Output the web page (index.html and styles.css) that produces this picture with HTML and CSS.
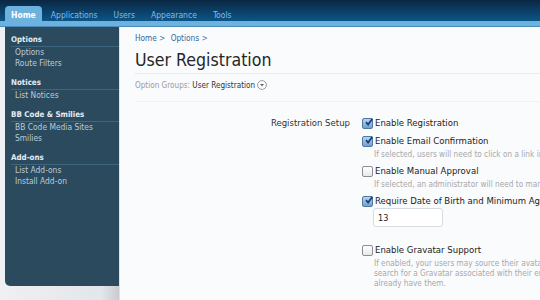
FILE: index.html
```html
<!DOCTYPE html>
<html lang="en">
<head>
    <meta charset="UTF-8">
    <title>User Registration</title>
    <link rel="stylesheet" href="styles.css">
</head>
<body>
    <div class="header">
        <nav class="tabs">
            <a class="tab active">Home</a>
            <a class="tab">Applications</a>
            <a class="tab">Users</a>
            <a class="tab">Appearance</a>
            <a class="tab">Tools</a>
        </nav>
    </div>
    <div class="band"></div>

    <div class="main">
        <div class="side-col">
            <aside class="sidebar">
                <div class="side-group">
                    <h3>Options</h3>
                    <a>Options</a>
                    <a>Route Filters</a>
                </div>
                <div class="side-group">
                    <h3>Notices</h3>
                    <a>List Notices</a>
                </div>
                <div class="side-group">
                    <h3>BB Code &amp; Smilies</h3>
                    <a>BB Code Media Sites</a>
                    <a>Smilies</a>
                </div>
                <div class="side-group">
                    <h3>Add-ons</h3>
                    <a>List Add-ons</a>
                    <a>Install Add-on</a>
                </div>
            </aside>
            <div class="side-foot"></div>
        </div>

        <div class="content">
            <div class="crumbs"><a>Home</a> &gt; <a>Options</a> &gt;</div>
            <h1>User Registration</h1>
            <div class="groups">
                <span class="muted">Option Groups:</span> User Registration
                <span class="drop"><svg width="10" height="10" viewBox="0 0 10 10"><circle cx="5" cy="5" r="4.4" fill="#fff" stroke="#999"/><path d="M3 4h4L5 6.4z" fill="#666"/></svg></span>
            </div>

            <div class="form">
                <div class="label">Registration Setup</div>
                <div class="options">
                    <div class="opt">
                        <label class="check"><span class="box on"><svg width="10" height="10" viewBox="0 0 10 10"><path d="M2 5.2l2.1 2.3L8.4 1.8" fill="none" stroke="#1d3f6e" stroke-width="1.8"/></svg></span>Enable Registration</label>
                    </div>
                    <div class="opt">
                        <label class="check"><span class="box on"><svg width="10" height="10" viewBox="0 0 10 10"><path d="M2 5.2l2.1 2.3L8.4 1.8" fill="none" stroke="#1d3f6e" stroke-width="1.8"/></svg></span>Enable Email Confirmation</label>
                        <p class="hint">If selected, users will need to click on a link in an email before their registration is completed.</p>
                    </div>
                    <div class="opt">
                        <label class="check"><span class="box"></span>Enable Manual Approval</label>
                        <p class="hint">If selected, an administrator will need to manually approve users before their registration is completed.</p>
                    </div>
                    <div class="opt">
                        <label class="check"><span class="box on"><svg width="10" height="10" viewBox="0 0 10 10"><path d="M2 5.2l2.1 2.3L8.4 1.8" fill="none" stroke="#1d3f6e" stroke-width="1.8"/></svg></span>Require Date of Birth and Minimum Age</label>
                        <input class="age" type="text" value="13">
                    </div>
                    <div class="opt gap">
                        <label class="check"><span class="box"></span>Enable Gravatar Support</label>
                        <p class="hint">If enabled, your users may source their avatars from Gravatar.com. When a user registers, XenForo will<br>search for a Gravatar associated with their email address and use it automatically, so they may<br>already have them.</p>
                    </div>
                </div>
            </div>
        </div>
    </div>
</body>
</html>
```

FILE: styles.css
```css
body {
    margin: 0;
    width: 540px;
    height: 300px;
    overflow: hidden;
    font-family: "DejaVu Sans Condensed", "DejaVu Sans", sans-serif;
    font-size: 9.5px;
    background-color: #fafbfd;
    color: #222;
}

.header {
    height: 21px;
    background: linear-gradient(to bottom, #0a2742, #0c5587);
}

.tabs {
    display: flex;
    align-items: flex-end;
    height: 21px;
    padding-left: 5px;
}

.tab {
    padding: 0 8px;
    height: 15px;
    line-height: 18px;
    color: #7fbde8;
    font-size: 8.5px;
}

.tab.active {
    background-color: #6db1de;
    color: #fff;
    font-weight: bold;
    border-radius: 4px 4px 0 0;
    padding: 0 6px;
    margin-right: 1px;
}

.band {
    height: 5px;
    background-color: #6db1de;
    border-bottom: 1px solid #4a8dba;
}

.main {
    display: flex;
    height: 273px;
}

.side-col {
    width: 119px;
    flex-shrink: 0;
    display: flex;
    flex-direction: column;
    background: linear-gradient(to right, #eef0f3, #e3e6ea 85%, #c8ccd1);
}

.sidebar {
    margin-left: 5px;
    height: 259px;
    background-color: #2c4a5e;
    border-radius: 0 0 0 5px;
    padding-top: 7px;
    box-sizing: border-box;
}

.side-group {
    margin-bottom: 8px;
}

.side-group h3 {
    margin: 0 0 0 6px;
    font-size: 7.9px;
    color: #e3ecf3;
    border-bottom: 1px solid #3d6680;
    line-height: 12px;
}

.side-group a {
    display: block;
    padding-left: 10px;
    color: #b9ccda;
    font-size: 8.4px;
    line-height: 11px;
}

.content {
    flex: 1;
    padding: 4px 0 0 15px;
    border-left: 1px solid #dde3ea;
    white-space: nowrap;
    overflow: hidden;
}

.crumbs {
    color: #4d7ea6;
    font-size: 8.2px;
    line-height: 14px;
}

.crumbs a {
    color: #2f679a;
}

.crumbs a:nth-child(2) {
    margin-left: 3px;
}

h1 {
    margin: 3px 0 0;
    font-weight: normal;
    font-size: 17.6px;
    line-height: 24px;
    color: #262626;
    padding-bottom: 1px;
    border-bottom: 1px solid #e6ecf2;
}

.groups {
    margin-top: 4px;
    font-size: 8.1px;
    line-height: 14px;
    color: #333;
    padding-bottom: 9px;
    border-bottom: 1px solid #eef1f5;
}

.muted {
    color: #9a9a9a;
}

.drop svg {
    vertical-align: -2px;
}

.form {
    display: flex;
    gap: 12px;
    margin-top: 14px;
}

.label {
    width: 215px;
    flex-shrink: 0;
    text-align: right;
    color: #333;
    line-height: 14px;
}

.options {
    display: flex;
    flex-direction: column;
    gap: 4px;
}

.opt.gap {
    margin-top: 12px;
}

.check {
    display: flex;
    align-items: center;
    gap: 2px;
    line-height: 14px;
    color: #222;
}

.box {
    width: 9px;
    height: 9px;
    border: 1px solid #8d8d8d;
    border-radius: 2px;
    background: linear-gradient(to bottom, #fff, #e9e9e9);
    display: flex;
    align-items: center;
    justify-content: center;
}

.box.on {
    border-color: #51799f;
    background: linear-gradient(to bottom, #b6d4f0, #6ea0d3);
}

.box svg {
    margin-top: -2px;
    margin-right: -2px;
}

.hint {
    margin: 1px 0 1px 12px;
    font-size: 8.2px;
    line-height: 10px;
    color: #a8a8a8;
}

.age {
    display: block;
    margin: 0 0 0 11px;
    width: 70px;
    height: 19px;
    box-sizing: border-box;
    border: 1px solid #d6dce2;
    border-radius: 3px;
    padding: 0 4px;
    font-family: inherit;
    font-size: 9px;
    color: #222;
    background-color: #fff;
}
```
